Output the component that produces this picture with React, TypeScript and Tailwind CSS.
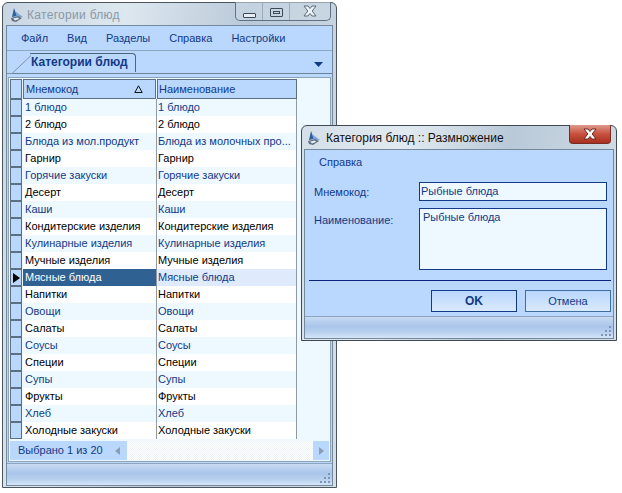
const rows = ["1 блюдо","2 блюдо","Блюда из мол.продукт","Гарнир","Горячие закуски","Десерт","Каши","Кондитерские изделия","Кулинарные изделия","Мучные изделия","Мясные блюда","Напитки","Овощи","Салаты","Соусы","Специи","Супы","Фрукты","Хлеб","Холодные закуски"];
const second: Record<string,string> = {"Блюда из мол.продукт":"Блюда из молочных про..."};

function AppIcon() {
  return (
    <svg width="18" height="18" viewBox="0 0 18 18" className="shrink-0">
      <path d="M5 2 L8 10 L3 11 Z" fill="#2f5f9f" />
      <path d="M6 5 L14 11 L8 11 Z" fill="#7fa6d6" />
      <path d="M2 12 L9 10 L13 12 L7 16 L3 15 Z" fill="#5f6f82" />
      <path d="M4 12.5 L9 11.5 L10 13 L6 14.5 Z" fill="#e4ebf3" />
    </svg>
  );
}

function CloseGlyph({ fill, stroke }: { fill: string; stroke: string }) {
  return (
    <svg width="14" height="12" viewBox="0 0 14 12">
      <path d="M1 1 H5 L7 3.5 L9 1 H13 L9.2 6 L13 11 H9 L7 8.5 L5 11 H1 L4.8 6 Z" fill={fill} stroke={stroke} strokeWidth="1" />
    </svg>
  );
}

function Grip() {
  const dots = [[8,0],[8,4],[4,4],[8,8],[4,8],[0,8]];
  return (
    <svg width="10" height="10" viewBox="0 0 10 10" className="shrink-0">
      {dots.map(([x,y]) => <rect key={`${x}-${y}`} x={x} y={y} width="2" height="2" fill="#7d96b4" />)}
    </svg>
  );
}

function StatusBar() {
  return (
    <div className="h-[22px] shrink-0 border-t border-[#8fa5bd] bg-[linear-gradient(#c8dbf2_0%,#a9c5ea_45%,#bad2f0_75%,#d5e5f8_100%)] flex items-end justify-end pr-0.5 pb-0.5">
      <Grip />
    </div>
  );
}

export default function App() {
  return (
    <div className="relative w-[622px] h-[493px] bg-white overflow-hidden text-[11px] leading-none font-['Liberation_Sans',sans-serif]">
      {/* main window */}
      <div className="absolute left-[2px] top-[2px] w-[335px] h-[486px] rounded-t-[6px] border border-[#4a5560] bg-[linear-gradient(100deg,#c9d6e2_0%,#dde7ef_30%,#b9c9d8_60%,#d4dfe8_100%)] flex flex-col px-[3px] pb-[1px]">
        <div className="h-[22px] flex items-center shrink-0 relative pl-[3px] pt-[2px]">
          <AppIcon />
          <span className="text-[12px] text-[#8b98a5] tracking-[0.3px]">Категории блюд</span>
          <div className="absolute right-[2px] -top-px h-[19px] w-[96px] flex border border-t-0 border-[#5f7184] rounded-b-[5px] bg-[#cbd8e4]/60">
            <div className="w-[27px] border-r border-[#9aabbb] flex items-center justify-center"><div className="w-[13px] h-[5px] border border-[#3b4a58] rounded-[1px] mt-2 bg-white/60" /></div>
            <div className="w-[27px] border-r border-[#9aabbb] flex items-center justify-center"><div className="w-[13px] h-[9px] border border-[#3b4a58] rounded-[1px] flex items-center justify-center mt-0.5"><div className="w-[7px] h-[3px] border border-[#3b4a58]" /></div></div>
            <div className="flex-1 flex items-center justify-center"><CloseGlyph fill="#eef3f8" stroke="#5b6b7a" /></div>
          </div>
        </div>
        <div className="flex-1 min-h-0 flex flex-col border border-[#75899d] bg-[#bad7fd]">
          <div className="h-[25px] shrink-0 flex items-center pl-[14px] pt-px gap-[19px] border-b border-[#8da6c0] text-[#123a88]">
            <span>Файл</span><span>Вид</span><span>Разделы</span><span>Справка</span><span>Настройки</span>
          </div>
          <div className="h-[23px] shrink-0 flex items-end relative border-b border-[#6f8398] pl-[23px]">
            <svg width="26" height="22" viewBox="0 0 26 22" className="absolute left-0 bottom-[-1px]">
              <path d="M0 21.5 H5 L24 3.5" fill="none" stroke="#7f92a8" />
            </svg>
            <div className="h-[19px] w-[106px] mb-[1px] rounded-tr-[4px] border-r border-t border-[#50657c] bg-[#bad7fd] flex items-center font-bold text-[#123a88] text-[12px] pl-px pb-[3px]">Категории блюд</div>
            <svg width="9" height="5" viewBox="0 0 9 5" className="absolute right-[9px] top-[11px]"><path d="M0 0H9L4.5 5Z" fill="#123a88" /></svg>
          </div>
          <div className="flex-1 min-h-0 mx-px mt-[3px] mb-px border border-[#8da3b8] flex flex-col bg-[#eef9ff]">
            <div className="flex-1 min-h-0 pl-px pt-px">
              <div className="flex h-[20px]">
                <div className="w-[12px] border border-[#5c6f83] bg-[#bad7fd] mr-px" />
                <div className="w-[133px] border border-[#5c6f83] bg-[#bad7fd] flex items-center justify-between pl-[2px] pr-3 text-[#123a88]">
                  <span>Мнемокод</span>
                  <svg width="9" height="8" viewBox="0 0 9 8"><path d="M4.5 0.8 L8.2 7.5 H0.8 Z" fill="none" stroke="#111" /></svg>
                </div>
                <div className="w-[140px] ml-px border border-[#5c6f83] bg-[#bad7fd] flex items-center pl-px text-[#123a88]">Наименование</div>
              </div>
              {rows.map((r, i) => {
                const sel = i === 10;
                const odd = i % 2 === 0;
                const cellBg = sel ? "bg-[#dfebfd]" : odd ? "bg-[#eef9ff]" : "bg-white";
                const color = odd ? "text-[#123a88]" : "text-black";
                return (
                  <div key={r} className="flex h-[17px]">
                    <div className="w-[12px] mr-px border border-[#5c6f83] bg-[#bad7fd] flex items-center justify-center">
                      {sel && <svg width="7" height="10" viewBox="0 0 7 10"><path d="M0 0 L7 5 L0 10Z" fill="#000" /></svg>}
                    </div>
                    <div className={`w-[133px] flex items-center pl-[2px] ${sel ? "bg-[#2f6193] text-white" : `${cellBg} ${color}`}`}>{r}</div>
                    <div className={`w-[141px] border-l border-r border-[#8f9aa5] flex items-center pl-px ${cellBg} ${sel ? "text-[#123a88]" : color}`}>{second[r] ?? r}</div>
                  </div>
                );
              })}
            </div>
            <div className="h-[19px] mx-[1px] mb-[1px] shrink-0 flex bg-[repeating-conic-gradient(#edf2f7_0%_25%,#fff_0%_50%)] bg-[length:2px_2px]">
              <div className="w-[117px] bg-[#bad7fd] flex items-center justify-between pl-2 pr-[7px] text-[#123a88]">
                <span>Выбрано 1 из 20</span>
                <svg width="5" height="8" viewBox="0 0 5 8"><path d="M5 0V8L0 4Z" fill="#8a9db3" /></svg>
              </div>
              <div className="flex-1" />
              <div className="w-[16px] bg-[#bad7fd] flex items-center justify-center">
                <svg width="5" height="8" viewBox="0 0 5 8"><path d="M0 0V8L5 4Z" fill="#8a9db3" /></svg>
              </div>
            </div>
          </div>
          <StatusBar />
        </div>
      </div>

      {/* dialog window */}
      <div className="absolute left-[301px] top-[125px] w-[316px] h-[216px] rounded-t-[6px] border border-[#3f4a55] bg-[linear-gradient(100deg,#d5dfe8_0%,#e2eaf1_30%,#b9c9d8_60%,#d4dfe8_100%)] flex flex-col px-[2px] pb-[1px]">
        <div className="h-[23px] shrink-0 flex items-center relative pl-[2px]">
          <AppIcon />
          <span className="text-[12px] text-[#111] ml-[2px]">Категория блюд :: Размножение</span>
          <div className="absolute right-[3px] -top-px w-[42px] h-[19px] rounded-b-[4px] border border-t-0 border-[#7a2b22] bg-[linear-gradient(#dd9a8e,#c9503f_50%,#a83020)] flex items-center justify-center"><CloseGlyph fill="#ffffff" stroke="#6b2a22" /></div>
        </div>
        <div className="flex-1 min-h-0 flex flex-col border border-[#75899d] bg-[#bad7fd] text-[#123a88]">
          <div className="h-[25px] shrink-0 flex items-center pl-[14px]">Справка</div>
          <div className="grid grid-cols-[105px_188px] pl-[9px] mt-[7px] gap-y-[7px]">
            <div className="flex items-center pt-[1px]">Мнемокод:</div>
            <div className="h-[19px] border border-[#123a88] bg-[#eef9ff] flex items-center pl-[1px]">Рыбные блюда</div>
            <div className="pt-[7px]">Наименование:</div>
            <div className="h-[62px] border border-[#123a88] bg-[#eef9ff] pl-[3px] pt-[3px]">Рыбные блюда</div>
          </div>
          <div className="ml-[4px] mr-[2px] mt-[10px] border-t border-[#10207f]" />
          <div className="flex justify-end gap-2 mr-[2px] mt-[9px]">
            <div className="w-[86px] h-[22px] border border-[#123a88] bg-[linear-gradient(#bad7fd,#d9e9fd)] flex items-center justify-center font-bold text-[12px]">OK</div>
            <div className="w-[86px] h-[22px] border border-[#3f6f9f] bg-[linear-gradient(#bad7fd,#d9e9fd)] flex items-center justify-center">Отмена</div>
          </div>
          <div className="flex-1" />
          <StatusBar />
        </div>
      </div>
    </div>
  );
}
